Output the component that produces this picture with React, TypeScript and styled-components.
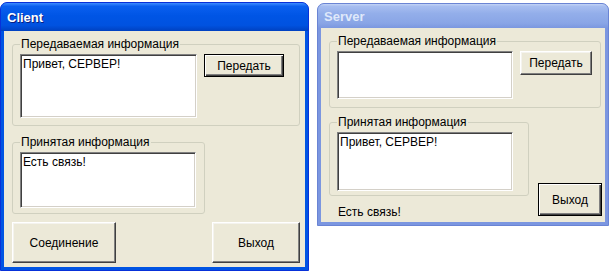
import React from 'react';
import styled, { createGlobalStyle } from 'styled-components';

const GlobalStyle = createGlobalStyle`
	html, body {
		margin: 0;
		padding: 0;
		background: #ffffff;
	}
	body {
		font-family: 'Liberation Sans', Arial, sans-serif;
		font-size: 12px;
		color: #000;
	}
`;

export default function App() {
	return (
		<>
			<GlobalStyle />
			<Desk>
				<Window width={309} top={2} bottom={1}>
					<TitleBar>
						<Title>Client</Title>
					</TitleBar>
					<Body>
						<Group width={288} height={89}>
							<Legend>Передаваемая информация</Legend>
							<GroupRow>
								<TextBox width={177} height={64} value="Привет, СЕРВЕР!" readOnly />
								<Button width={80} height={23} isDefault>
									Передать
								</Button>
							</GroupRow>
						</Group>
						<Group width={193} height={79} style={{ marginTop: 9 }}>
							<Legend>Принятая информация</Legend>
							<GroupRow>
								<TextBox width={176} height={56} value="Есть связь!" readOnly />
							</GroupRow>
						</Group>
						<ButtonRow>
							<Button width={104} height={41}>
								Соединение
							</Button>
							<Button width={88} height={41}>
								Выход
							</Button>
						</ButtonRow>
					</Body>
				</Window>
				<Window width={292} top={3} bottom={46} inactive>
					<TitleBar inactive>
						<Title inactive>Server</Title>
					</TitleBar>
					<Body>
						<Group width={272} height={74}>
							<Legend>Передаваемая информация</Legend>
							<GroupRow>
								<TextBox width={176} height={48} value="" readOnly />
								<Button width={72} height={24}>
									Передать
								</Button>
							</GroupRow>
						</Group>
						<LowerRow>
							<Column>
								<Group width={200} height={81}>
									<Legend>Принятая информация</Legend>
									<GroupRow>
										<TextBox width={176} height={59} value="Привет, СЕРВЕР!" readOnly />
									</GroupRow>
								</Group>
								<Status>Есть связь!</Status>
							</Column>
							<Button width={64} height={33} isDefault style={{ marginBottom: 6 }}>
								Выход
							</Button>
						</LowerRow>
					</Body>
				</Window>
			</Desk>
		</>
	);
}

const Desk = styled.div`
	display: flex;
	align-items: flex-start;
	gap: 8px;
	width: 611px;
	height: 272px;
	overflow: hidden;
`;

interface TypeWindow {
	width: number;
	top: number;
	bottom: number;
	inactive?: boolean;
}

const Window = styled.div<TypeWindow>`
	display: flex;
	flex-direction: column;
	width: ${({ width }) => width}px;
	margin-top: ${({ top }) => top}px;
	margin-bottom: ${({ bottom }) => bottom}px;
	align-self: stretch;
	box-sizing: border-box;
	border-radius: 7px 7px 0 0;
	background: ${({ inactive }) => (inactive ? '#7b96e0' : '#0054e3')};
	border: 1px solid ${({ inactive }) => (inactive ? '#6a84d4' : '#0831d9')};
	padding: 0 3px 3px;
	overflow: hidden;
`;

interface TypeInactive {
	inactive?: boolean;
}

const TitleBar = styled.div<TypeInactive>`
	display: flex;
	align-items: center;
	height: 28px;
	margin: 0 -3px;
	padding: 0 6px;
	background: ${({ inactive }) =>
		inactive
			? 'linear-gradient(180deg, #c2d3f6 0%, #a6bdf0 10%, #93aeea 40%, #89a5e6 80%, #7b97df 100%)'
			: 'linear-gradient(180deg, #3d8cff 0%, #0a5fef 12%, #0055e5 45%, #0052e0 80%, #0041c0 100%)'};
`;

const Title = styled.span<TypeInactive>`
	font-family: 'Liberation Sans', Arial, sans-serif;
	font-weight: bold;
	font-size: 13px;
	color: ${({ inactive }) => (inactive ? '#dfe8fa' : '#ffffff')};
	text-shadow: ${({ inactive }) => (inactive ? 'none' : '1px 1px 0 #0a1e80')};
`;

const Body = styled.div`
	flex: 1;
	display: flex;
	flex-direction: column;
	background: #ece9d8;
	padding: 6px 4px 0 8px;
`;

interface TypeGroup {
	width: number;
	height: number;
}

const Group = styled.fieldset<TypeGroup>`
	box-sizing: border-box;
	width: ${({ width }) => width}px;
	height: ${({ height }) => height}px;
	margin: 0;
	padding: 2px 0 0 7px;
	border: 1px solid #d0d0bf;
	border-radius: 3px;
	min-width: 0;
`;

const Legend = styled.legend`
	padding: 0 1px;
	margin-left: 0;
	font-size: 12px;
	line-height: 14px;
	color: #000;
`;

const GroupRow = styled.div`
	display: flex;
	align-items: flex-start;
	gap: 7px;
	padding-top: 1px;
`;

interface TypeBox {
	width: number;
	height: number;
}

const TextBox = styled.textarea<TypeBox>`
	box-sizing: border-box;
	width: ${({ width }) => width}px;
	height: ${({ height }) => height}px;
	margin: 0;
	padding: 2px 2px;
	resize: none;
	overflow: hidden;
	background: #ffffff;
	font-family: 'Liberation Sans', Arial, sans-serif;
	font-size: 12px;
	line-height: 14px;
	color: #000;
	border-style: solid;
	border-width: 1px;
	border-color: #808080 #ffffff #ffffff #808080;
	box-shadow: inset 1px 1px 0 #404040, inset -1px -1px 0 #d4d0c8;
	outline: none;
`;

interface TypeButton {
	width: number;
	height: number;
	isDefault?: boolean;
}

const Button = styled.button<TypeButton>`
	box-sizing: border-box;
	width: ${({ width }) => width}px;
	height: ${({ height }) => height}px;
	margin: 0;
	padding: 0;
	background: #ece9d8;
	font-family: 'Liberation Sans', Arial, sans-serif;
	font-size: 12px;
	color: #000;
	border-style: solid;
	border-width: 1px;
	border-color: ${({ isDefault }) => (isDefault ? '#000000' : '#ffffff #404040 #404040 #ffffff')};
	box-shadow: ${({ isDefault }) =>
		isDefault
			? 'inset 1px 1px 0 #ffffff, inset -1px -1px 0 #404040, inset -2px -2px 0 #808080'
			: 'inset -1px -1px 0 #808080, inset 1px 1px 0 #f4f3ee'};
	flex: none;
`;

const ButtonRow = styled.div`
	display: flex;
	justify-content: space-between;
	margin-top: 8px;
	width: 288px;
`;

const LowerRow = styled.div`
	display: flex;
	align-items: flex-end;
	gap: 9px;
	margin-top: 7px;
`;

const Column = styled.div`
	display: flex;
	flex-direction: column;
`;

const Status = styled.div`
	margin: 9px 0 0 9px;
	font-size: 12px;
	line-height: 14px;
	height: 17px;
`;
